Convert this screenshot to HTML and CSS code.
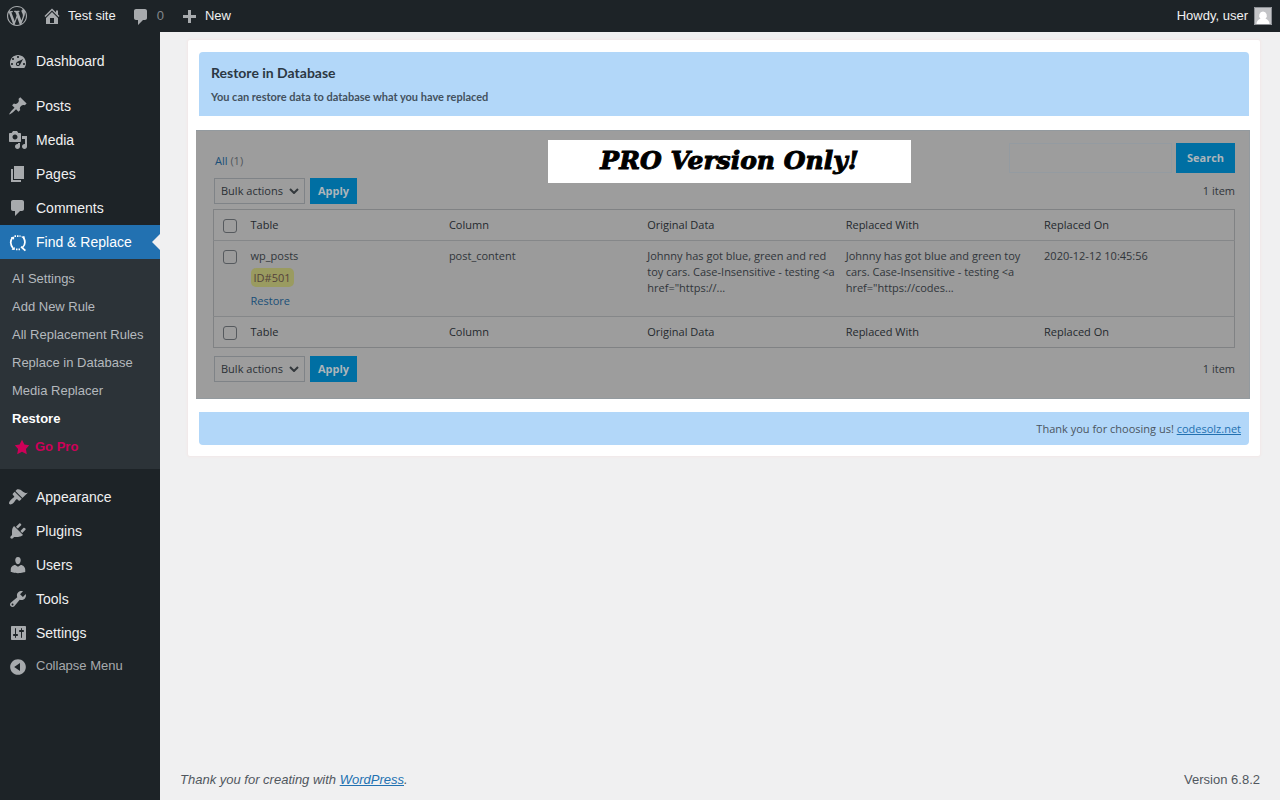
FILE: index.html
```html
<!DOCTYPE html>
<html lang="en">
<head>
<meta charset="utf-8">
<meta name="viewport" content="width=device-width, initial-scale=1">
<title>Restore in Database</title>
<link rel="stylesheet" href="styles.css">
</head>
<body>
<header class="bar">
  <a class="bar-item" href="#" aria-label="About WordPress"><svg class="icon" viewBox="0 0 20 20"><path d="M20 10c0-5.51-4.49-10-10-10C4.48 0 0 4.49 0 10c0 5.52 4.48 10 10 10 5.51 0 10-4.48 10-10zM7.78 15.37L4.37 6.22c.55-.02 1.17-.08 1.17-.08.5-.06.44-1.13-.06-1.11 0 0-1.45.11-2.37.11-.18 0-.37 0-.58-.01C4.12 2.69 6.87 1.11 10 1.11c2.33 0 4.45.87 6.05 2.34-.68-.11-1.65.39-1.65 1.58 0 .74.45 1.36.9 2.1.35.61.55 1.36.55 2.46 0 1.49-1.4 5-1.4 5l-3.03-8.37c.54-.02.82-.17.82-.17.5-.05.44-1.25-.06-1.22 0 0-1.44.12-2.38.12-.87 0-2.33-.12-2.33-.12-.5-.03-.56 1.2-.06 1.22l.92.08 1.26 3.41zM17.41 10c.24-.64.74-1.87.43-4.25.7 1.29 1.05 2.71 1.05 4.25 0 3.29-1.73 6.24-4.4 7.78.97-2.59 1.94-5.2 2.92-7.78zM6.1 18.09C3.12 16.65 1.11 13.53 1.11 10c0-1.3.23-2.48.72-3.59C3.25 10.3 4.67 14.2 6.1 18.09zm4.03-6.63l2.58 6.98c-.86.29-1.76.45-2.71.45-.79 0-1.57-.11-2.29-.33.81-2.38 1.62-4.74 2.42-7.1z"/></svg></a>
  <a class="bar-item" href="#"><svg class="icon" viewBox="0 0 20 20"><path d="M16 8.5l1.53 1.53-1.06 1.06L10 4.6l-6.47 6.49-1.06-1.06L10 2.5l4 4v-2h2v4zm-6-2.46l6 5.99V18H4v-5.97zM12 17v-5H8v5h4z"/></svg><span>Test site</span></a>
  <a class="bar-item bar-count" href="#"><svg class="icon" viewBox="0 -1 20 20"><path d="M5 2h9c1.1 0 2 .9 2 2v7c0 1.1-.9 2-2 2h-2l-5 5v-5H5c-1.1 0-2-.9-2-2V4c0-1.1.9-2 2-2z"/></svg><span>0</span></a>
  <a class="bar-item" href="#"><svg class="icon" viewBox="0 -2 20 20"><path d="M17 7v3h-5v5H9v-5H4V7h5V2h3v5h5z"/></svg><span>New</span></a>
  <a class="bar-item bar-user" href="#"><span>Howdy, user</span><svg class="avatar" viewBox="0 0 18 18"><path fill="#c3c4c7" d="M0 0h18v18H0z"/><path fill="#fff" d="M9 4.500a4 4 0 0 1 2.500 7c2.500 1 4 3 4 5.500h-13c0-2.500 1.500-4.500 4-5.500a4 4 0 0 1 2.500-7z"/><path fill="none" stroke="#8c8f94" d="M.5.5h17v17H.5z"/></svg></a>
</header>
<div class="shell">
  <nav class="side" aria-label="Main menu">
    <a class="menu" href="#"><svg class="icon" viewBox="0 0 20 20"><path fill-rule="evenodd" d="M3.760 17h12.480c1.100-1.370 1.760-3.110 1.760-5 0-4.420-3.580-8-8-8s-8 3.580-8 8c0 1.890.66 3.630 1.760 5zM9 6c0-.55.45-1 1-1s1 .45 1 1c0 .56-.45 1-1 1s-1-.44-1-1zM4 8c0-.55.45-1 1-1s1 .45 1 1c0 .56-.45 1-1 1s-1-.44-1-1zM8.520 11.400c.84-.83 6.510-3.500 6.510-3.500s-2.660 5.680-3.490 6.510c-.84.84-2.180.84-3.020 0-.83-.83-.83-2.180 0-3.010zM3 13c0-.55.45-1 1-1s1 .45 1 1c0 .56-.45 1-1 1s-1-.44-1-1zm6 0c0-.55.45-1 1-1s1 .45 1 1c0 .56-.45 1-1 1s-1-.44-1-1zm6 0c0-.55.45-1 1-1s1 .45 1 1c0 .56-.45 1-1 1s-1-.44-1-1z"/></svg>Dashboard</a>
    <div class="gap"></div>
    <a class="menu" href="#"><svg class="icon" viewBox="0 0 20 20"><path d="M10.440 3.020l1.820-1.820 6.360 6.350-1.830 1.820c-1.050-.68-2.480-.57-3.410.36l-.75.75c-.92.93-1.040 2.350-.35 3.410l-1.830 1.820-2.410-2.410-2.800 2.790c-.42.42-3.380 2.710-3.800 2.290s1.860-3.390 2.280-3.810l2.790-2.790L4.100 9.360l1.830-1.820c1.050.69 2.480.57 3.400-.36l.75-.75c.93-.92 1.050-2.350.36-3.410z"/></svg>Posts</a>
    <a class="menu" href="#"><svg class="icon" viewBox="0 0 20 20"><path d="M13 11V4c0-.55-.45-1-1-1h-1.670L9 1H5L3.670 3H2c-.55 0-1 .45-1 1v7c0 .55.45 1 1 1h10c.55 0 1-.45 1-1zM7 4.500c1.380 0 2.500 1.120 2.500 2.500S8.380 9.500 7 9.500 4.500 8.380 4.500 7 5.620 4.500 7 4.500zM14 6h5v10.500c0 1.380-1.120 2.500-2.500 2.500S14 17.880 14 16.500s1.120-2.500 2.500-2.500c.17 0 .34.02.5.05V9h-3V6zm-4 8.050V13h2v3.500c0 1.380-1.120 2.500-2.500 2.500S7 17.880 7 16.500 8.120 14 9.500 14c.17 0 .34.02.5.05z" fill-rule="evenodd"/></svg>Media</a>
    <a class="menu" href="#"><svg class="icon" viewBox="0 0 20 20"><path d="M6 15V2h10v13H6zm-1 1h8v2H3V5h2v11z"/></svg>Pages</a>
    <a class="menu" href="#"><svg class="icon" viewBox="0 0 20 20"><path d="M5 2h9c1.100 0 2 .9 2 2v7c0 1.100-.9 2-2 2h-2l-5 5v-5H5c-1.100 0-2-.9-2-2V4c0-1.100.9-2 2-2z"/></svg>Comments</a>
    <a class="menu current" href="#"><svg class="icon" viewBox="0 0 20 20"><g fill="none" stroke="#fff" stroke-width="1.700"><path d="M4.500 5.500C2 9 2.500 13.500 5.500 17M15.500 5.500c2 3.500 1.500 7.500-1 10"/><path d="M6.500 4.200h6" stroke-dasharray="1.500 1"/><path d="M8 17.300h4.500" stroke-dasharray="1.500 1"/></g><path fill="#fff" d="M2.800 5.200l3.500-.7-.3 3.200zM13 4.700l3.400-.7.300 3.500zM3.500 17.800l3.200.2.300-3zM13.500 14l4.500 4-1.200 1.200-4.300-3.700z"/></svg>Find &amp; Replace</a>
    <div class="sub">
      <a href="#">AI Settings</a>
      <a href="#">Add New Rule</a>
      <a href="#">All Replacement Rules</a>
      <a href="#">Replace in Database</a>
      <a href="#">Media Replacer</a>
      <a class="active" href="#" aria-current="page">Restore</a>
      <a class="pro" href="#"><svg class="star" viewBox="0 0 20 20"><path d="M10 1l3 6 6 .75-4.120 4.620L16 19l-6-3-6 3 1.130-6.630L1 7.750 7 7z"/></svg>Go Pro</a>
    </div>
    <div class="gap"></div>
    <a class="menu" href="#"><svg class="icon" viewBox="0 0 20 20"><path d="M14.480 11.060L7.410 3.990l1.500-1.500c.5-.56 2.300-.47 3.510.32 1.210.8 1.430 1.280 2.910 2.100 1.180.64 2.450 1.260 4.450.85zm-.71.71L6.700 4.700 4.930 6.470c-.39.39-.39 1.020 0 1.410l1.060 1.060c.39.39.39 1.030 0 1.420-.6.6-1.430 1.110-2.210 1.690-.35.26-.7.53-1.010.84C1.430 14.230.4 16.080 1.400 17.070c.99 1 2.840-.03 4.180-1.360.31-.31.58-.66.85-1.020.57-.78 1.080-1.610 1.690-2.210.39-.39 1.020-.39 1.410 0l1.060 1.060c.39.39 1.020.39 1.410 0z"/></svg>Appearance</a>
    <a class="menu" href="#"><svg class="icon" viewBox="0 0 20 20"><path d="M13.110 4.360L9.870 7.600 8 5.730l3.240-3.240c.35-.34 1.050-.2 1.560.32.52.51.66 1.210.31 1.550zm-8 1.770l.91-1.120 9.010 9.010-1.190.84c-.71.71-2.630 1.160-3.820 1.160H6.140L4.900 17.260c-.59.59-1.540.59-2.120 0-.59-.58-.59-1.530 0-2.120l1.240-1.240v-3.880c0-1.130.4-3.190 1.090-3.890zm7.260 3.970l3.240-3.240c.34-.35 1.040-.21 1.550.31.52.51.66 1.210.31 1.550l-3.240 3.250z"/></svg>Plugins</a>
    <a class="menu" href="#"><svg class="icon" viewBox="0 0 20 20"><path d="M10 9.250c-2.270 0-2.730-3.440-2.730-3.440C7 4.020 7.820 2 9.970 2c2.160 0 2.980 2.020 2.710 3.810 0 0-.41 3.440-2.680 3.440zm0 2.570L12.720 10c2.390 0 4.520 2.330 4.520 4.530v2.490s-3.650 1.130-7.240 1.130c-3.650 0-7.240-1.130-7.240-1.130v-2.490c0-2.250 1.940-4.480 4.470-4.480z"/></svg>Users</a>
    <a class="menu" href="#"><svg class="icon" viewBox="0 0 20 20"><path fill-rule="evenodd" d="M16.680 9.770c-1.340 1.340-3.300 1.670-4.950.99l-5.410 6.520c-.99.99-2.590.99-3.580 0s-.99-2.590 0-3.570l6.520-5.420c-.68-1.650-.35-3.610.99-4.950 1.280-1.280 3.120-1.620 4.720-1.060l-2.890 2.890 2.820 2.820 2.860-2.870c.53 1.580.18 3.390-1.080 4.650zM3.810 16.210c.4.39 1.040.39 1.430 0 .4-.4.4-1.040 0-1.430-.39-.4-1.030-.4-1.430 0-.39.39-.39 1.030 0 1.430z"/></svg>Tools</a>
    <a class="menu" href="#"><svg class="icon" viewBox="0 0 20 20"><path fill-rule="evenodd" d="M18 16V4c0-.55-.45-1-1-1H4c-.55 0-1 .45-1 1v12c0 .55.45 1 1 1h13c.55 0 1-.45 1-1zM8 11h1c.55 0 1 .45 1 1s-.45 1-1 1H8v1.500c0 .28-.22.5-.5.5s-.5-.22-.5-.5V13H6c-.55 0-1-.45-1-1s.45-1 1-1h1V5.500c0-.28.22-.5.5-.5s.5.22.5.5V11zm5-2h-1c-.55 0-1-.45-1-1s.45-1 1-1h1V5.500c0-.28.22-.5.5-.5s.5.22.5.5V7h1c.55 0 1 .45 1 1s-.45 1-1 1h-1v5.500c0 .28-.22.5-.5.5s-.5-.22-.5-.5V9z"/></svg>Settings</a>
    <button class="collapse" type="button"><svg class="icon" viewBox="0 0 20 20"><path fill-rule="evenodd" d="M10 2.160c4.330 0 7.840 3.510 7.840 7.840s-3.510 7.840-7.840 7.840S2.160 14.330 2.160 10 5.710 2.160 10 2.160zm2 11.720V6.120L6.180 9.970z"/></svg><span>Collapse Menu</span></button>
  </nav>
  <div class="content">
    <main class="card">
      <header class="intro">
        <h1>Restore in Database</h1>
        <p>You can restore data to database what you have replaced</p>
      </header>
      <section class="panel">
        <div class="pro-note">PRO Version Only!</div>
        <div class="filters">
          <a href="#">All <span>(1)</span></a>
          <form class="search"><input type="search" aria-label="Search rules"><button type="button">Search</button></form>
        </div>
        <div class="actions">
          <div class="pick"><select aria-label="Bulk actions, top"><option>Bulk actions</option></select><svg viewBox="0 0 10 6"><path d="M1 1l4 4 4-4"/></svg></div>
          <button type="button">Apply</button>
          <span class="total">1 item</span>
        </div>
        <table>
          <thead><tr><td class="tick"><input type="checkbox" aria-label="Select all"></td><th>Table</th><th>Column</th><th>Original Data</th><th>Replaced With</th><th>Replaced On</th></tr></thead>
          <tbody><tr><td class="tick"><input type="checkbox" aria-label="Select wp_posts"></td><td>wp_posts<span class="tag">ID#501</span><a href="#">Restore</a></td><td>post_content</td><td>Johnny has got blue, green and red<br>toy cars. Case-Insensitive - testing &lt;a<br>href="https://...</td><td>Johnny has got blue and green toy<br>cars. Case-Insensitive - testing &lt;a<br>href="https://codes...</td><td>2020-12-12 10:45:56</td></tr></tbody>
          <tfoot><tr><td class="tick"><input type="checkbox" aria-label="Select all, bottom"></td><th>Table</th><th>Column</th><th>Original Data</th><th>Replaced With</th><th>Replaced On</th></tr></tfoot>
        </table>
        <div class="actions">
          <div class="pick"><select aria-label="Bulk actions, bottom"><option>Bulk actions</option></select><svg viewBox="0 0 10 6"><path d="M1 1l4 4 4-4"/></svg></div>
          <button type="button">Apply</button>
          <span class="total">1 item</span>
        </div>
      </section>
      <footer class="thanks">Thank you for choosing us! <a href="#">codesolz.net</a></footer>
    </main>
    <footer class="foot"><span><em>Thank you for creating with <a href="#">WordPress</a>.</em></span><span>Version 6.8.2</span></footer>
  </div>
</div>
</body>
</html>
```
FILE: styles.css
```css
* { box-sizing: border-box; }

body {
  margin: 0;
  min-height: 100vh;
  display: flex;
  flex-direction: column;
  background: #f0f0f1;
  color: #3c434a;
  font: 13px/18px "Liberation Sans", Arial, sans-serif;
}

a { color: #2271b1; }

button, input, select { font: inherit; margin: 0; border-radius: 0; }

.icon { width: 20px; height: 20px; flex: none; fill: #a7aaad; }

/* Top bar */
.bar {
  height: 32px;
  display: flex;
  align-items: center;
  gap: 15px;
  padding: 0 8px 0 7px;
  background: #1d2327;
}

.bar-item {
  display: flex;
  align-items: center;
  gap: 6px;
  color: #f0f0f1;
  text-decoration: none;
}

.bar-count span { color: #82878c; }
.bar-user { margin-left: auto; }
.avatar { width: 18px; height: 18px; }

.shell { flex: 1; display: flex; }

/* Side menu */
.side {
  width: 160px;
  flex: none;
  padding-top: 12px;
  background: #1d2327;
}

.menu {
  position: relative;
  display: flex;
  align-items: center;
  gap: 8px;
  height: 34px;
  padding-left: 8px;
  color: #f0f0f1;
  font-size: 14px;
  text-decoration: none;
}

.gap { height: 11px; }
.current { background: #2271b1; color: #fff; }

.current::after {
  content: "";
  position: absolute;
  right: 0;
  top: 9px;
  border: 8px solid transparent;
  border-left-width: 0;
  border-right-color: #f0f0f1;
}

.sub { padding: 6px 0 8px; background: #2c3338; }

.sub a {
  display: flex;
  align-items: center;
  height: 28px;
  padding-left: 12px;
  color: #b4b9be;
  text-decoration: none;
}

.sub .active { color: #fff; font-weight: bold; }
.sub .pro { gap: 5px; padding-left: 14px; color: #ce0058; font-weight: bold; }
.star { width: 16px; height: 16px; fill: #ce0058; }

.collapse {
  display: flex;
  align-items: center;
  gap: 8px;
  height: 34px;
  padding: 0 0 0 8px;
  border: 0;
  background: none;
  color: #a7aaad;
}

.collapse span { padding-bottom: 2px; }

/* Content */
.content {
  flex: 1;
  min-width: 0;
  display: flex;
  flex-direction: column;
  justify-content: space-between;
  padding: 8px 20px 11px;
}

.card {
  margin: 0 0 0 8px;
  padding: 12px 11px 11px;
  background: #fff;
  border-radius: 2px;
  box-shadow: 0 0 2px 1px #f2e8e8;
  font: 11px/16px "Open Sans", sans-serif;
}

.intro {
  padding: 10px 12px 11px;
  border-radius: 4px 4px 0 0;
  background: #b2d7f9;
  font-family: Lato, "Open Sans", sans-serif;
}

.intro h1 { margin: 0; color: #2c3844; font-size: 14px; line-height: 22px; font-weight: 700; }
.intro p { margin: 5px 0 0; color: #43515e; font-weight: 700; }

.panel {
  position: relative;
  margin: 14px -1px 13px -3px;
  padding: 12px 14px 11px 17px;
  border: 1px solid #939a9f;
  border-width: 1px 1px 1px 0;
  background: #9d9d9d;
  color: #30353a;
}

.pro-note {
  position: absolute;
  left: 352px;
  top: 9px;
  width: 363px;
  height: 43px;
  background: #fff;
  color: #000;
  font: italic bold 25px/42px "DejaVu Serif", serif;
  -webkit-text-stroke: 1px #000;
  text-align: center;
}

.panel a { color: #194f78; text-decoration: none; }
.filters { display: flex; justify-content: space-between; padding-left: 2px; }
.filters > a { padding-top: 10px; }
.filters span { color: #50565b; }
.search { display: flex; gap: 4px; }
.search input { width: 163px; height: 30px; border: 1px solid #949ba1; background: none; }

.panel button {
  padding: 0 9px;
  border: 0;
  background: #006fa3;
  color: #adb5ba;
  font-weight: 700;
}

.search button { width: 59px; padding: 0; }

.actions { display: flex; align-items: center; gap: 5px; padding-left: 1px; margin: 5px 0; }
.actions button { width: 47px; height: 26px; padding: 0; }
.total { margin-left: auto; }

.pick { position: relative; width: 91px; height: 26px; }

.pick select {
  width: 100%;
  height: 100%;
  padding: 0 6px;
  appearance: none;
  border: 1px solid #7f8387;
  background: none;
  color: #2b3035;
}

.pick svg {
  position: absolute;
  right: 6px;
  top: 10px;
  width: 10px;
  height: 6px;
  fill: none;
  stroke: #33383c;
  stroke-width: 2;
}

table {
  width: 100%;
  table-layout: fixed;
  border: 1px solid #808284;
  border-collapse: collapse;
  margin-bottom: 8px;
}

td, th { padding: 7px 8px; text-align: left; vertical-align: top; white-space: nowrap; }
th { color: #24292e; font-weight: 400; }
thead tr, tfoot tr { height: 31px; }
tbody tr { height: 76px; background: #9b9b9b; border: solid #858789; border-width: 1px 0; }
tbody td { padding-bottom: 4px; }
.tick { width: 29px; padding: 9px 0 0 9px; }
.tag { display: block; width: 43px; margin: 4px 0 6px; border-radius: 5px; background: #9a9b60; color: #54423c; line-height: 19px; text-align: center; }

input[type="checkbox"] {
  display: block;
  width: 14px;
  height: 14px;
  appearance: none;
  border: 1px solid #565a5e;
  border-radius: 3px;
}

.thanks {
  padding: 9px 8px 8px;
  border-radius: 0 0 4px 4px;
  background: #b2d7f9;
  color: #4a5560;
  text-align: right;
}

.foot { display: flex; justify-content: space-between; color: #50575e; }
```
